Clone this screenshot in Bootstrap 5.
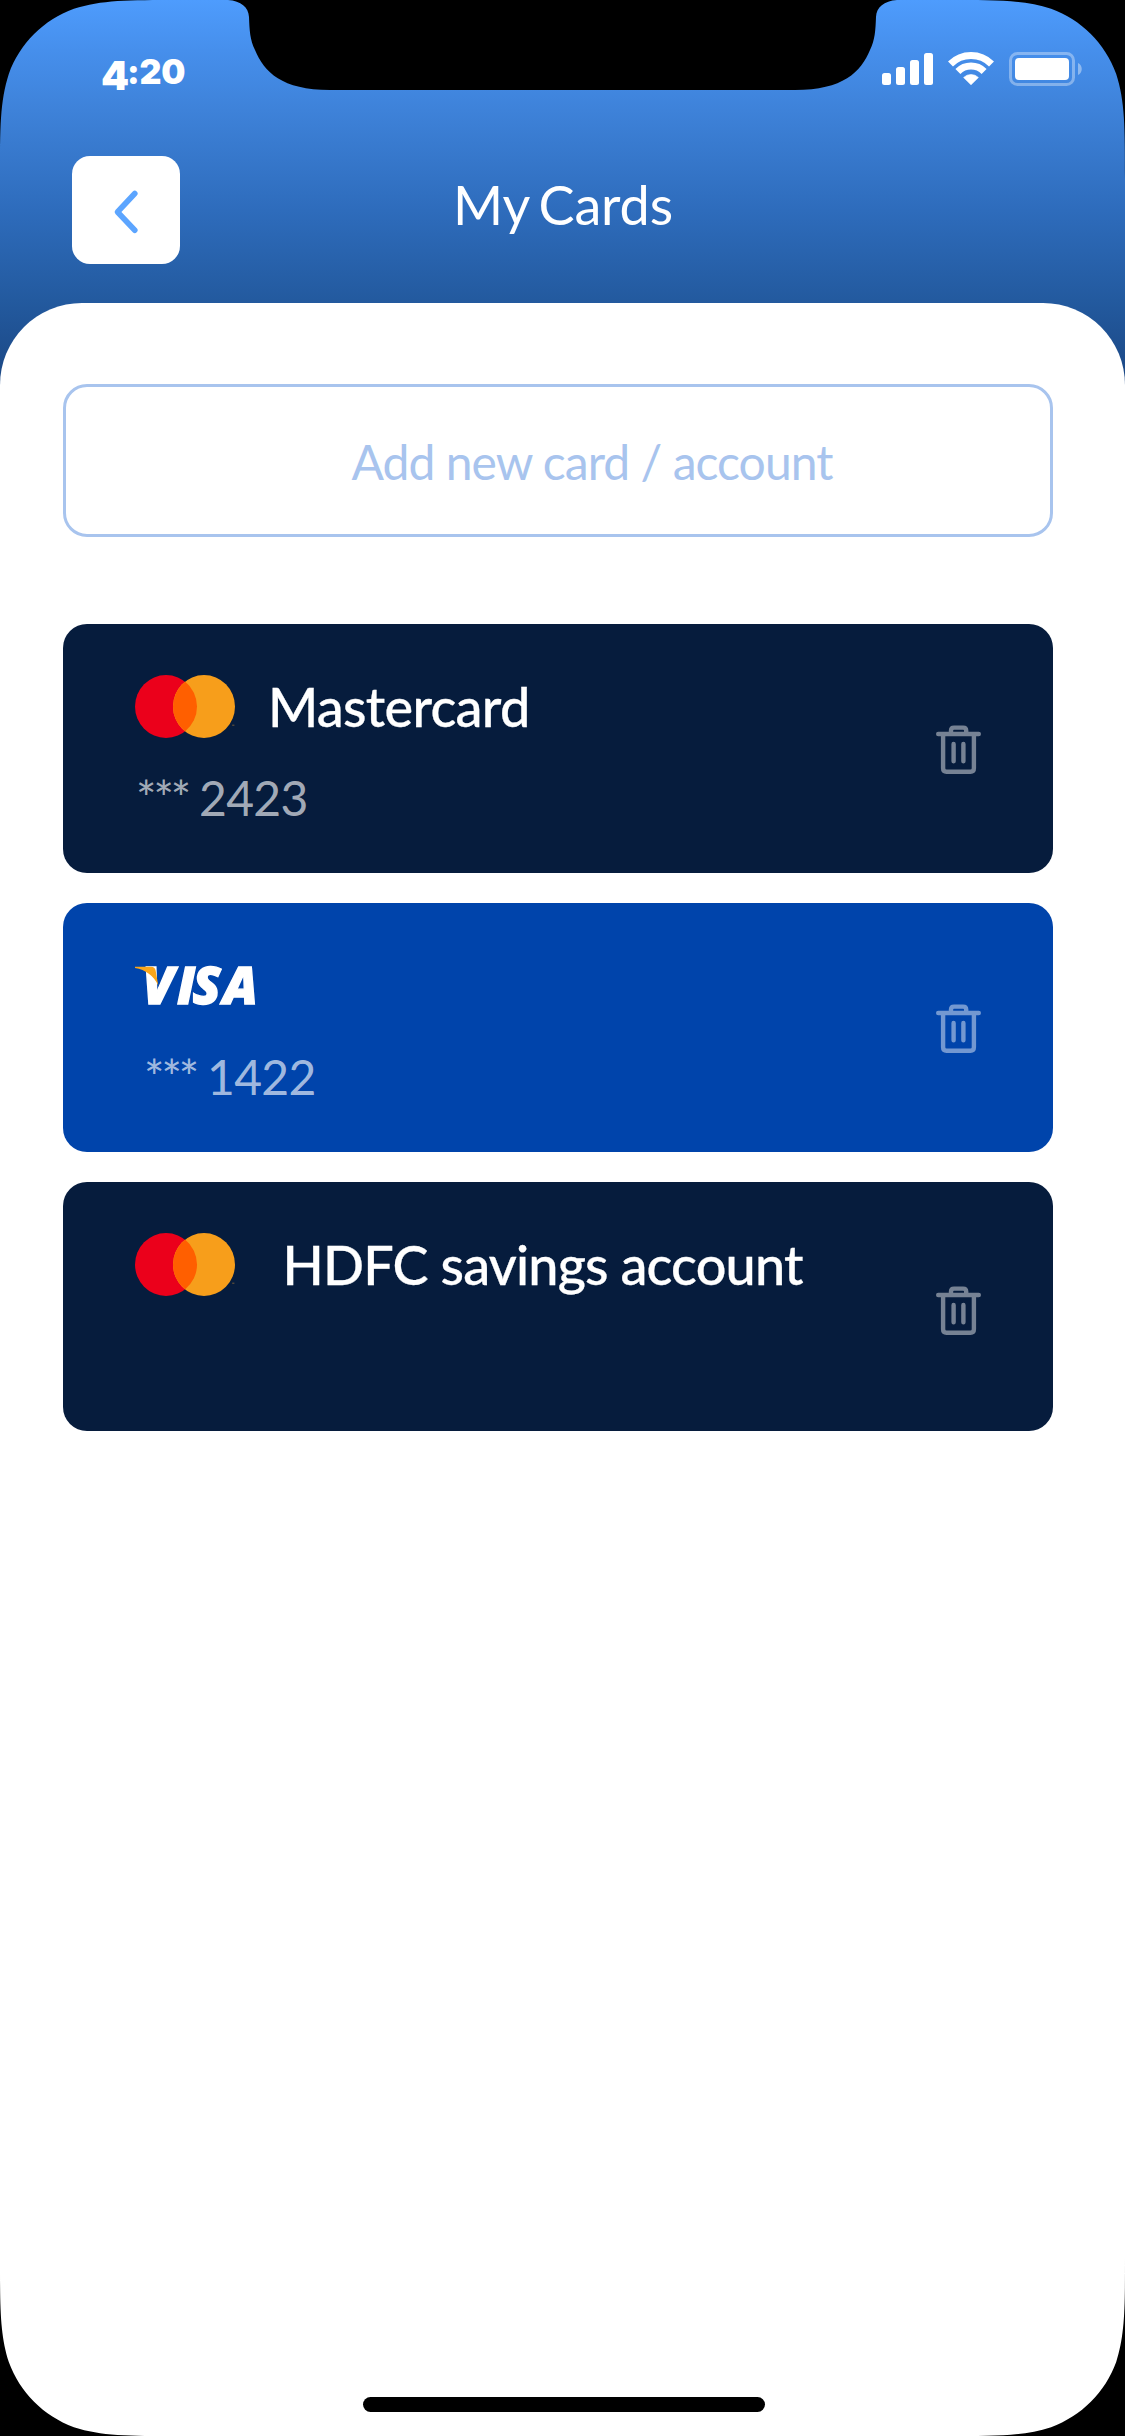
<!DOCTYPE html>
<html lang="en">
<head>
<meta charset="utf-8">
<meta name="viewport" content="width=device-width, initial-scale=1">
<title>My Cards</title>
<link href="https://cdn.jsdelivr.net/npm/bootstrap@5.3.0/dist/css/bootstrap.min.css" rel="stylesheet">
<style>
  body { font-family: Lato, "Noto Sans", sans-serif; background: #000; }
  .phone { width: 1125px; height: 2436px; background: linear-gradient(180deg, #4e9cfd 0, #468fec 50px, #3e82d9 110px, #2e6cbc 210px, #235a9f 300px, #1a4581 390px); }
  .frame { inset: 0; width: 1125px; height: 2436px; pointer-events: none; z-index: 3; }
  .statusbar { height: 156px; padding: 49px 42px 0 101px; }
  .status-icons { margin-top: 2px; }
  .clock { font: 900 34px/46px Inter, sans-serif; letter-spacing: -.3px; }
  .clock-hour { font-size: 40px; line-height: 30px; letter-spacing: -2px; vertical-align: -6px; }
  .topbar { height: 147px; padding: 0 72px 39px; }
  .back-btn { width: 108px; height: 108px; border-radius: 18px; --bs-btn-bg: #fff; --bs-btn-hover-bg: #f2f7ff; }
  .screen-title { font-size: 54px; line-height: 65px; font-weight: 400; letter-spacing: -.15px; word-spacing: -4px; padding: 0 0 12px 1px; }
  .sheet { border-radius: 82px 82px 0 0; padding: 81px 72px 0 63px; }
  .add-btn { height: 153px; border: 3px solid #a8c4ee; border-radius: 24px; color: #a8c4ee; font-size: 48px; line-height: 58px; letter-spacing: -.95px; padding: 2px 0 0 68px; margin-bottom: 87px; }
  .pay-list { gap: 30px; }
  .pay-card { height: 249px; border: 0; border-radius: 24px; padding: 50px 72px 0; background: #061c3d; color: #fff; }
  .pay-card.visa { background: #0044ab; }
  .brand-row { height: 65px; }
  .pay-name { font-size: 54px; line-height: 63px; font-weight: 500; letter-spacing: -.72px; margin-left: 33px; -webkit-text-stroke: .3px #fff; }
  .pay-name.bank { letter-spacing: -.83px; margin-left: 47.5px; }
  .pay-number { font-size: 48px; line-height: 58px; letter-spacing: -.7px; color: rgba(255,255,255,.65); margin: 30px 0 0 1px; }
  .pay-number .dots { letter-spacing: -3px; word-spacing: 1.5px; }
  .visa .pay-number { margin-left: 9px; }
  .trash-btn { margin-top: 51px; color: #fff; opacity: .45; line-height: 0; }
  .trash-btn.low { margin-top: 54px; }
  .home-bar { width: 402px; height: 15px; bottom: 24px; left: 363px; z-index: 4; }
</style>
</head>
<body>
<svg width="0" height="0" class="position-absolute" aria-hidden="true">
  <symbol id="trash" viewBox="0 0 45 49">
    <g fill="none" stroke="currentColor" stroke-width="4.4" stroke-linecap="round" stroke-linejoin="round">
      <path d="M2.2 9H42.8M7.1 9V43.2q0 3.5 3.5 3.5H34.4q3.5 0 3.5-3.5V9M15 8V5.6q0-3 3-3H27.2q3 0 3 3V8M17.6 19V36.2M27.4 19V36.2"/>
    </g>
  </symbol>
  <symbol id="mastercard" viewBox="0 0 100 63">
    <ellipse cx="31" cy="31.5" rx="31" ry="31.5" fill="#eb001b"/>
    <ellipse cx="69" cy="31.5" rx="31" ry="31.5" fill="#f79e1b"/>
    <path d="M50 6.600A31 31.500 0 0 1 50 56.400A31 31.500 0 0 1 50 6.600Z" fill="#ff5f00"/>
    <path d="M97.200 50.200h2.200" stroke="#8d6a3a" stroke-width=".8"/>
  </symbol>
</svg>

<div class="phone position-relative overflow-hidden d-flex flex-column">
  <header class="text-white">
    <div class="statusbar d-flex justify-content-between align-items-start">
      <div class="clock"><span class="clock-hour">4</span>:20</div>
      <svg class="status-icons" width="201" height="36" viewBox="882 51 201 36" fill="#fff" aria-label="Signal, Wi-Fi and battery">
        <rect x="882" y="73" width="9" height="12" rx="2.500"/>
        <rect x="896" y="67" width="9" height="18" rx="2.500"/>
        <rect x="910" y="60" width="9" height="25" rx="2.500"/>
        <rect x="924" y="53" width="9" height="32" rx="2.500"/>
        <g fill="none" stroke="#fff" stroke-width="7">
          <path d="M950.500 64.100A29 29 0 0 1 991.500 64.100"/>
          <path d="M957.900 71.500A18.500 18.500 0 0 1 984.100 71.500"/>
        </g>
        <path d="M971 84.800L963.600 77.500A10.500 10.500 0 0 1 978.400 77.500Z" stroke="#fff" stroke-width=".6"/>
        <rect x="1010.500" y="53.500" width="63" height="31" rx="7" fill="none" stroke="#fff" stroke-width="3" opacity=".35"/>
        <rect x="1015" y="58" width="54" height="22" rx="4"/>
        <path d="M1078 63C1083 65 1083 73 1078 75Z" opacity=".4"/>
      </svg>
    </div>
    <div class="topbar d-flex align-items-center">
      <button type="button" class="btn back-btn p-0 border-0 d-flex align-items-center justify-content-center" aria-label="Back">
        <svg width="108" height="108" viewBox="0 0 108 108" fill="none" stroke="#5ca5ff" stroke-width="5.600" stroke-linecap="round" stroke-linejoin="round"><path d="M62.800 37.500L45.500 56L62.800 74.200"/></svg>
      </button>
      <h1 class="screen-title flex-grow-1 text-center m-0">My Cards</h1>
      <div class="back-btn invisible"></div>
    </div>
  </header>

  <main class="sheet bg-white flex-grow-1">
    <button type="button" class="btn add-btn w-100 d-flex align-items-center justify-content-center">Add new card / account</button>
    <div class="pay-list d-flex flex-column">
      <article class="card pay-card flex-row justify-content-between">
        <div>
          <div class="brand-row d-flex align-items-center">
            <svg width="100" height="63"><use href="#mastercard"/></svg>
            <div class="pay-name">Mastercard</div>
          </div>
          <div class="pay-number"><span class="dots">*** </span>2423</div>
        </div>
        <a class="trash-btn align-self-start" role="button" aria-label="Delete"><svg width="45" height="49"><use href="#trash"/></svg></a>
      </article>
      <article class="card pay-card visa flex-row justify-content-between">
        <div>
          <div class="brand-row d-flex align-items-center">
            <svg width="122" height="39" viewBox="0 0 122 39" overflow="visible">
              <text y="38" x="7.500 42 57.500 88" font-family="Open Sans, sans-serif" font-style="italic" font-weight="800" font-size="51.500" fill="#fff" stroke="#fff" stroke-width="1.300">VISA</text>
              <path d="M0 .8H16Q19.800 .8 20.600 4.500L23.300 19.500Q16 4.500 0 2Z" fill="#faa61a"/>
            </svg>
          </div>
          <div class="pay-number"><span class="dots">*** </span>1422</div>
        </div>
        <a class="trash-btn align-self-start" role="button" aria-label="Delete"><svg width="45" height="49"><use href="#trash"/></svg></a>
      </article>
      <article class="card pay-card flex-row justify-content-between">
        <div class="brand-row d-flex align-items-center">
          <svg width="100" height="63"><use href="#mastercard"/></svg>
          <div class="pay-name bank">HDFC savings account</div>
        </div>
        <a class="trash-btn low align-self-start" role="button" aria-label="Delete"><svg width="45" height="49"><use href="#trash"/></svg></a>
      </article>
    </div>
  </main>

  <!-- device bezel: rounded corners and notch -->
  <svg class="frame position-absolute" viewBox="0 0 1125 2436" aria-hidden="true">
    <defs>
      <path id="corner" d="M0 0H178.900C127.400 0 101.600 0 73.900 8.800C43.600 19.800 19.800 43.600 8.800 73.900C0 101.600 0 127.400 0 178.900Z"/>
      <path id="notch-half" d="M228 0C241 1 248.500 7 249 17C249.500 30 250 40 255 50C264 72 282 90 330 90H563V0Z"/>
    </defs>
    <use href="#corner"/>
    <use href="#corner" transform="translate(1125 0) scale(-1 1)"/>
    <use href="#corner" transform="translate(0 2436) scale(1 -1)"/>
    <use href="#corner" transform="translate(1125 2436) scale(-1 -1)"/>
    <use href="#notch-half"/>
    <use href="#notch-half" transform="translate(1125 0) scale(-1 1)"/>
  </svg>
  <div class="home-bar position-absolute bg-black rounded-pill"></div>
</div>
<script src="https://cdn.jsdelivr.net/npm/bootstrap@5.3.0/dist/js/bootstrap.bundle.min.js"></script>
</body>
</html>
